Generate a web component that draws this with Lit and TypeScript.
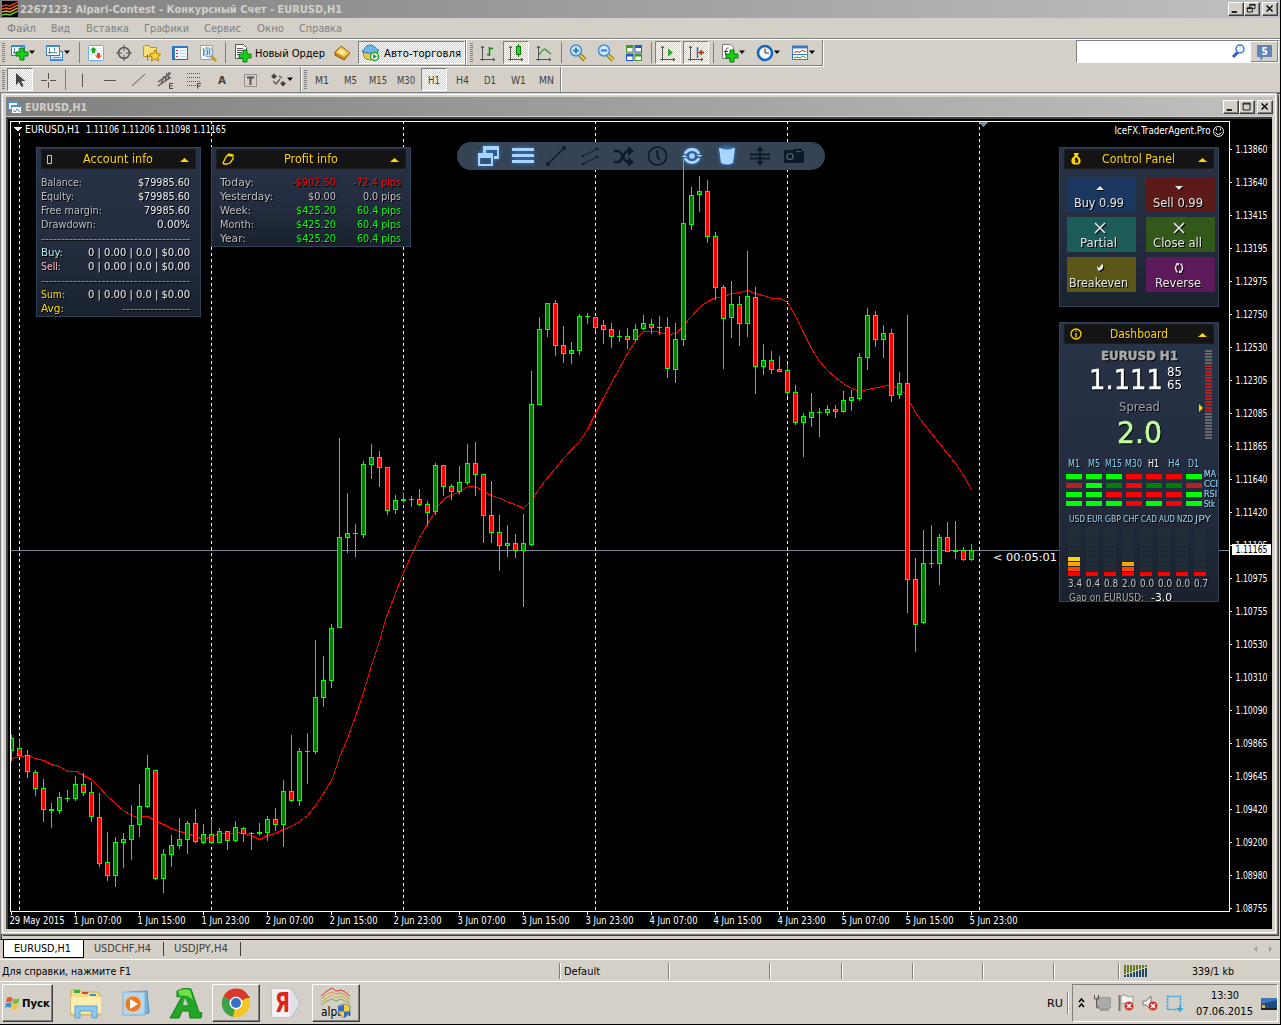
import { LitElement, html, svg, css, nothing } from 'lit';
import { customElement } from 'lit/decorators.js';
import { classMap } from 'lit/directives/class-map.js';
import { styleMap } from 'lit/directives/style-map.js';

// [high, top, bottom, low, up]; one candle every 8px
const CANDLES: number[][] = [
  [735, 738, 751, 761, 1], [740, 748, 756, 756, 0], [750, 755, 772, 778, 0], [770, 772, 789, 796, 0],
  [779, 788, 810, 822, 0], [803, 809, 811, 828, 1], [792, 797, 811, 814, 1], [790, 798, 799, 802, 1],
  [776, 784, 799, 801, 1], [773, 784, 793, 796, 0], [782, 792, 817, 822, 0], [793, 817, 864, 867, 0],
  [832, 862, 876, 881, 0], [837, 842, 876, 887, 1], [833, 839, 843, 868, 1], [805, 825, 840, 860, 1],
  [784, 806, 825, 837, 1], [755, 768, 807, 808, 1], [770, 770, 879, 880, 0], [849, 854, 879, 893, 1],
  [835, 845, 855, 867, 1], [818, 839, 846, 849, 1], [821, 823, 840, 854, 1], [809, 823, 842, 843, 0],
  [824, 834, 843, 844, 1], [819, 834, 843, 844, 0], [828, 831, 843, 843, 1], [831, 831, 841, 850, 0],
  [821, 827, 841, 842, 1], [827, 828, 834, 842, 0], [832, 833, 834, 850, 1], [823, 832, 834, 836, 1],
  [816, 819, 833, 841, 1], [808, 819, 825, 831, 0], [780, 791, 825, 847, 1], [735, 791, 801, 802, 0],
  [748, 751, 801, 806, 1], [733, 751, 752, 784, 1], [640, 697, 752, 754, 1], [656, 680, 698, 707, 1],
  [624, 628, 681, 688, 1], [438, 537, 628, 628, 1], [493, 533, 538, 553, 1], [524, 533, 534, 557, 1],
  [461, 464, 535, 538, 1], [444, 457, 465, 479, 1], [451, 457, 468, 487, 0], [467, 467, 511, 515, 0],
  [495, 500, 510, 514, 1], [493, 499, 501, 503, 1], [496, 499, 500, 507, 1], [489, 499, 505, 506, 0],
  [501, 504, 513, 526, 0], [463, 465, 512, 515, 1], [465, 465, 487, 496, 0], [484, 486, 492, 500, 0],
  [466, 482, 492, 494, 1], [444, 463, 483, 485, 1], [442, 463, 475, 496, 0], [474, 474, 516, 543, 0],
  [481, 515, 533, 543, 0], [515, 532, 546, 571, 0], [525, 543, 546, 557, 1], [534, 543, 551, 558, 0],
  [514, 543, 551, 607, 1], [371, 404, 545, 546, 1], [317, 329, 405, 405, 1], [303, 303, 330, 337, 1],
  [300, 303, 346, 356, 0], [326, 345, 354, 363, 0], [342, 350, 354, 364, 1], [314, 316, 351, 355, 1],
  [313, 316, 317, 324, 1], [317, 317, 328, 331, 0], [320, 325, 330, 344, 0], [323, 329, 337, 348, 0],
  [330, 336, 337, 342, 1], [328, 336, 340, 349, 0], [324, 329, 340, 342, 1], [315, 323, 329, 330, 1],
  [319, 324, 328, 334, 0], [316, 327, 328, 335, 1], [317, 327, 369, 378, 0], [323, 339, 370, 383, 1],
  [159, 223, 340, 346, 1], [187, 195, 225, 230, 1], [176, 191, 195, 212, 1], [180, 191, 237, 243, 0],
  [232, 236, 288, 300, 0], [285, 287, 319, 369, 0], [281, 304, 318, 338, 1], [296, 304, 324, 346, 0],
  [251, 296, 324, 337, 1], [287, 297, 367, 394, 0], [344, 360, 367, 375, 1], [351, 360, 370, 374, 0],
  [356, 369, 372, 372, 0], [364, 370, 393, 397, 0], [385, 392, 423, 425, 0], [413, 416, 423, 457, 1],
  [393, 412, 418, 427, 1], [408, 412, 413, 437, 1], [405, 409, 413, 416, 1], [405, 409, 412, 418, 0],
  [391, 400, 412, 413, 1], [390, 397, 401, 411, 1], [353, 357, 399, 401, 1], [308, 315, 358, 370, 1],
  [311, 315, 340, 347, 0], [325, 333, 340, 358, 1], [329, 333, 396, 402, 0], [372, 383, 395, 399, 1],
  [315, 383, 580, 613, 0], [558, 579, 625, 652, 0], [530, 563, 623, 624, 1], [525, 563, 564, 568, 1],
  [534, 537, 564, 585, 1], [522, 537, 552, 552, 0], [521, 550, 552, 559, 1], [547, 550, 560, 561, 0],
  [544, 550, 560, 561, 1],
];

const MA =
  '12,758 19,756 28,755 35,758 43,760 51,764 59,766 67,771 76,771 83,775 91,779 99,787 107,796 115,803 123,810 131,815 ' +
  '137,817 147,816 155,820 163,824 171,828 179,831 187,833 195,836 203,839 211,836 220,833 230,833 237,832 247,834 253,836 ' +
  '259,839 267,835 275,833 283,829 291,826 299,821 307,815 315,805 323,793 332,778 339,757 347,738 355,716 363,692 371,665 ' +
  '379,641 385,619 403,572 420,535 428,522 438,505 444,498 452,494 458,492 467,486 475,486 483,491 491,495 500,498 509,502 ' +
  '517,505 523,508 531,500 540,486 550,474 563,458 579,441 587,429 595,413 602,399 627,353 638,336 643,331 656,331 663,333 ' +
  '670,334 677,332 682,326 690,317 700,306 707,301 713,298 723,296 731,293 740,292 747,290 755,293 763,295 771,298 780,298 ' +
  '787,302 796,317 803,332 811,348 819,361 827,370 835,377 843,383 851,388 860,391 867,389 877,387 887,385 897,387 904,393 ' +
  '910,403 915,412 923,423 939,443 955,463 963,475 971,489';

const PRICES = [
  '1.13860', '1.13640', '1.13415', '1.13195', '1.12975', '1.12750', '1.12530', '1.12305', '1.12085', '1.11865', '1.11640', '1.11420',
  '1.11195', '1.10975', '1.10755', '1.10530', '1.10310', '1.10090', '1.09865', '1.09645', '1.09420', '1.09200', '1.08980', '1.08755',
];

const TIMES = [
  '29 May 2015', '1 Jun 07:00', '1 Jun 15:00', '1 Jun 23:00', '2 Jun 07:00', '2 Jun 15:00', '2 Jun 23:00', '3 Jun 07:00',
  '3 Jun 15:00', '3 Jun 23:00', '4 Jun 07:00', '4 Jun 15:00', '4 Jun 23:00', '5 Jun 07:00', '5 Jun 15:00', '5 Jun 23:00',
];

// single text line squeezed to a known width
const fit = (text: string, w: number, cls = '', h = 14, base = 11) => html`
  <svg class="fit ${cls}" width=${w} height=${h}><text x="0" y=${base} textLength=${w} lengthAdjust="spacingAndGlyphs">${text}</text></svg>`;

const icon = (body: unknown, size = 20) => html`<svg class="ico" width=${size} height=${size} viewBox="0 0 ${size} ${size}">${body}</svg>`;

const plus = (x: number, y: number) => svg`
  <path d="M${x + 4} ${y}h4v4h4v4h-4v4h-4v-4h-4v-4h4z" fill="#19d019" stroke="#0a7d0a"/>`;

const axes = svg`<path d="M4.500 3v15M2 16.500h15M3 5l1.500-2 1.500 2M15 15l2 1.500-2 1.500" fill="none" stroke="#555"/>`;

const lens = (sign: string) => svg`
  <path d="M12 12l5 5" stroke="#8a6a10" stroke-width="4"/><path d="M12 12l5 5" stroke="#f3d34a" stroke-width="2"/>
  <circle cx="8" cy="7.500" r="5.500" fill="#cfe9fb" stroke="#3f8fd0" stroke-width="1.500"/>
  <path d=${sign} stroke="#2f7fc4" stroke-width="2"/>`;

const ICONS: Record<string, unknown> = {
  newChart: svg`<rect x="1.500" y="2.500" width="13" height="10" fill="#fff" stroke="#3a7cc0"/><path d="M1 3h14" stroke="#3a8be0" stroke-width="2"/>
    <path d="M4.500 5v6M3 9.500h8M9 5v4" stroke="#5b87ad" fill="none"/>${plus(6, 5)}`,
  profiles: svg`<rect x="5.500" y="8.500" width="12" height="9" fill="#e8f2fb" stroke="#3a7cc0"/><rect x="1.500" y="2.500" width="13" height="10" fill="#fff" stroke="#3a7cc0"/>
    <path d="M1 3h14M5 17h13" stroke="#3a8be0" stroke-width="2"/><path d="M4.500 5v6M3 9.500h9M9.500 5v3M8 14.500h8" stroke="#5b87ad" fill="none"/>`,
  market: svg`<rect x="2.500" y="2.500" width="15" height="15" rx="1" fill="#fff" stroke="#6aaee6"/><path d="M4 5.500h12M4 8.500h12M4 11.500h12" stroke="#dbe6ee"/>
    <path d="M7.500 4l3.500 3.500h-2v2.500h-3v-2.500h-2z" fill="#1da51d"/><path d="M12.500 16l-3.500-3.500h2v-2.500h3v2.500h2z" fill="#e5432a"/>`,
  target: svg`<circle cx="10" cy="10" r="5.500" fill="none" stroke="#555" stroke-width="1.500"/><path d="M10 2v16M2 10h16" stroke="#555"/><circle cx="10" cy="10" r="2" fill="#d4d0c8"/>`,
  navigator: svg`<path d="M1.500 3.500l1-1h5l1 2h6v9h-13z" fill="#f7dc79" stroke="#b8922a"/><path d="M5.500 12v6" stroke="#222" stroke-dasharray="1 1"/>
    <path d="M13 7l1.800 3.700 4 .5-3 2.800.8 4-3.600-2-3.600 2 .8-4-3-2.800 4-.5z" fill="#ffd12e" stroke="#a87d12"/>`,
  dataWin: svg`<rect x="2.500" y="3.500" width="15" height="13" fill="#f2f8fd" stroke="#2468b4"/><path d="M3 4h14M4 4v12" stroke="#2d78cc" stroke-width="2"/>
    <path d="M6 7.500h2M6 10.500h2M6 13.500h2" stroke="#c33"/><path d="M10 7.500h6M10 10.500h6M10 13.500h6" stroke="#c4d8ea"/>`,
  tester: svg`<path d="M2.500 2.500h12v14h-12z" fill="#f4f4f0" stroke="#a0a09a"/><path d="M5.500 5v8M8.500 4v9" stroke="#68b"/><path d="M13 13l5 5" stroke="#c99a1b" stroke-width="3"/>
    <circle cx="10.500" cy="9.500" r="4.500" fill="#bfe0f4" fill-opacity=".9" stroke="#6f9ab8"/><path d="M9.500 7v5M11.500 6.500v5" stroke="#48a"/>`,
  order: svg`<path d="M2.500 1.500h8l3 3v11h-11z" fill="#fff" stroke="#555"/><path d="M4 5.500h6M4 7.500h8M4 9.500h5M4 11.500h4" stroke="#556"/>${plus(6, 7)}`,
  editor: svg`<path d="M3 9l6-6 9 7-6 7-9-5z" fill="#c98d16" stroke="#8a5d08"/><path d="M3.500 9.500l5.500-6 8.500 6.500-5.500 4z" fill="#f5c84a"/><path d="M5 9.500l4-4 5 4-3 2.500z" fill="#fde79c"/>`,
  auto: svg`<path d="M2 9q0 8 7 8t8-8z" fill="#e9c94c" stroke="#a8851d"/><path d="M1 8c3-1 3-6 8-6s5 4 9 5c-1 4-15 4-17 1z" fill="#6fb6e4" stroke="#2e78ae"/>
    <circle cx="13.500" cy="13.500" r="4" fill="#fff" stroke="#1fa52a" stroke-width="1.500"/><path d="M12 11l4 2.500-4 2.500z" fill="#1fa52a"/>`,
  bars: svg`${axes}<path d="M11.500 4v9M9 11.500h2M12 5.500h3" stroke="#0a8a0a" stroke-width="1.500" fill="none"/>`,
  candles: svg`${axes}<path d="M12.500 1v13" stroke="#087a08"/><rect x="10.500" y="3.500" width="4" height="8" fill="#2bd52b" stroke="#087a08"/>`,
  line: svg`${axes}<path d="M5 12q5-8 7-5l5 4" fill="none" stroke="#2a9a2a" stroke-width="1.300"/>`,
  zoomIn: lens('M5 7.500h6M8 4.500v6'),
  zoomOut: lens('M5 7.500h6'),
  tile: svg`<path d="M2 2h7.500v7.500h-7.500z" fill="#3f9a22"/><path d="M10.500 2h7.500v7.500h-7.500z" fill="#2456cc"/><path d="M2 10.500h7.500v7.500h-7.500z" fill="#2456cc"/><path d="M10.500 10.500h7.500v7.500h-7.500z" fill="#3f9a22"/>
    <path d="M3 5h5.500v3.500h-5.500zM11.500 5h5.500v3.500h-5.500zM3 13.500h5.500v3.500h-5.500zM11.500 13.500h5.500v3.500h-5.500z" fill="#fff"/>`,
  scroll: svg`${axes}<path d="M10 5.500l5 4-5 4z" fill="#25b325"/>`,
  shift: svg`${axes}<path d="M11.500 4v11" stroke="#1f6fc0" stroke-width="1.500"/><path d="M12 9.500l4-3v2h2v2h-2v2z" fill="#c43a12"/>`,
  indicators: svg`<path d="M2.500 1.500h8l3 3v11h-11z" fill="#fff" stroke="#777"/><path d="M5.500 12q0-8 3-7M4 8.500h4" stroke="#444" fill="none"/>${plus(6, 7)}`,
  clock: svg`<circle cx="10" cy="10" r="7" fill="#f2f6fa" stroke="#1467c0" stroke-width="2.600"/><path d="M10 5.500v4.500h4" stroke="#333" fill="none"/>`,
  templates: svg`<rect x="2.500" y="3.500" width="15" height="13" fill="#fff" stroke="#3a7cc0"/><path d="M2 4h16" stroke="#3a7cc0" stroke-width="3"/><path d="M4 9.500l3-1 2 1 3-2 4 1" stroke="#a33" fill="none"/>
    <path d="M3 11.500h14" stroke="#3a7cc0"/><path d="M4 15l3-1 3 1 3-2 3 2" stroke="#2a9a2a" fill="none"/>`,
  cursor: svg`<path d="M6 3v12l3-3 2.500 5 2-1-2.300-5h4z" fill="#444"/>`,
  cross: svg`<path d="M10.500 3v6M10.500 12v6M3 10.500h6M12 10.500h6" stroke="#555"/>`,
  vline: svg`<path d="M10.500 4v13" stroke="#555"/>`,
  hline: svg`<path d="M4 10.500h12" stroke="#555"/>`,
  trend: svg`<path d="M4 16L17 4" stroke="#555"/>`,
  equi: svg`<path d="M2 12l13-9M2 16l13-9M5 14l3-8M9 12l2-9M12 10l1-8" stroke="#555" stroke-width="1.200"/><path d="M17 13.500h-3.500v5h3.500M13.500 16h3" stroke="#444" fill="none"/>`,
  fibo: svg`<path d="M3 3.500h14M3 7.500h14M3 11.500h14M3 15.500h9" stroke="#555" stroke-dasharray="1 1"/><path d="M17 13.500h-3.500v5M13.500 16h3" stroke="#444" fill="none"/>`,
  label: svg`<rect x="4.500" y="4.500" width="12" height="12" fill="none" stroke="#555" stroke-dasharray="1 1"/><path d="M7 7.500h7M10.500 7v8" stroke="#555" stroke-width="2"/>`,
  arrows: svg`<path d="M3 6.500l3-3 3 3-3 2.500zM12 13.500l3-2.500 3 2.500-3 3z" fill="#444"/><path d="M11 6l3 2M5 11l3 3 4-5" stroke="#555" fill="none" stroke-width="1.300"/>`,
};

type Tool = { k: string; on?: boolean; w?: number };

const TOOLS: Tool[] = [
  { k: 'grip' }, { k: 'newChart', w: 35 }, { k: 'profiles', w: 35 }, { k: 'sep' },
  { k: 'market' }, { k: 'target' }, { k: 'navigator' }, { k: 'dataWin' }, { k: 'tester' }, { k: 'sep' },
];
const CHART_TOOLS: Tool[] = [
  { k: 'grip' }, { k: 'bars' }, { k: 'candles', on: true }, { k: 'line' }, { k: 'sep' },
  { k: 'zoomIn' }, { k: 'zoomOut' }, { k: 'tile' }, { k: 'sep' }, { k: 'scroll', on: true }, { k: 'shift', on: true }, { k: 'sep' },
  { k: 'indicators', w: 35 }, { k: 'clock', w: 35 }, { k: 'templates', w: 36 },
];
const LINE_TOOLS: Tool[] = [
  { k: 'grip' }, { k: 'cursor', on: true }, { k: 'cross' }, { k: 'sep' }, { k: 'vline' }, { k: 'hline' }, { k: 'trend' },
  { k: 'equi' }, { k: 'fibo' }, { k: 'A' }, { k: 'label' }, { k: 'arrows', w: 36 },
];
const FRAMES: [string, number][] = [['M1', 14], ['M5', 13], ['M15', 18], ['M30', 18], ['H1', 12], ['H4', 13], ['D1', 12], ['W1', 15], ['MN', 15]];

const MENU: [string, number, number][] = [
  ['Файл', 7, 29], ['Вид', 51, 19], ['Вставка', 86, 43], ['Графики', 144, 45], ['Сервис', 204, 37], ['Окно', 257, 27], ['Справка', 299, 43],
];

const ACCOUNT: [string, number, string, number, string][] = [
  ['Balance:', 41, '$79985.60', 52, ''], ['Equity:', 33, '$79985.60', 52, ''], ['Free margin:', 61, '79985.60', 46, ''], ['Drawdown:', 55, '0.00%', 33, ''],
  ['', 0, '-------------------------------------', 149, 'rule'],
  ['Buy:', 22, '0 | 0.00 | 0.0 | $0.00', 102, 'buy'], ['Sell:', 20, '0 | 0.00 | 0.0 | $0.00', 102, 'sell'],
  ['', 0, '-------------------------------------', 149, 'rule'],
  ['Sum:', 24, '0 | 0.00 | 0.0 | $0.00', 102, 'sum'], ['Avg:', 23, '-----------------', 68, 'sum dim'],
];

const PROFIT: [string, number, string, number, string, number, string][] = [
  ['Today:', 34, '-$902.50', 44, '-72.4 pips', 48, 'loss'],
  ['Yesterday:', 53, '$0.00', 28, '0.0 pips', 38, 'flat'],
  ['Week:', 31, '$425.20', 40, '60.4 pips', 44, 'gain'],
  ['Month:', 34, '$425.20', 40, '60.4 pips', 44, 'gain'],
  ['Year:', 26, '$425.20', 40, '60.4 pips', 44, 'gain'],
];

const ACTIONS: [string, number, string, unknown][] = [
  ['Buy 0.99', 50, 'navy', svg`<path d="M6 12l4-4 4 4z"/>`],
  ['Sell 0.99', 50, 'maroon', svg`<path d="M6 8l4 4 4-4z"/>`],
  ['Partial', 37, 'teal', svg`<path d="M5 5l10 10M15 5L5 15" stroke="#e8e8e8" stroke-width="1.600"/>`],
  ['Close all', 49, 'moss', svg`<path d="M5 5l10 10M15 5L5 15" stroke="#e8e8e8" stroke-width="1.600"/>`],
  ['Breakeven', 59, 'olive', svg`<path d="M7 8l2 2 3-4 1 1c1 3-1 5-4 6-1-1-2-2-2-5z"/>`],
  ['Reverse', 46, 'plum', svg`<path d="M8.500 5.500q-4 4 0 9M11.500 5.500q4 4 0 9" fill="none" stroke="#e8e8e8" stroke-width="1.500"/><path d="M7 5h3v3zM13 15h-3v-3z"/>`],
];

const SIGNALS = ['lllrrrl', 'dlgrggd', 'llrrrrl', 'lllrlrl'];
const CURRENCIES: [string, number, string][] = [
  ['USD', 4, '3.4'], ['EUR', 1, '0.4'], ['GBP', 1, '0.8'], ['CHF', 3, '2.0'], ['CAD', 1, '0.0'], ['AUD', 1, '0.0'], ['NZD', 1, '0.0'], ['JPY', 1, '0.7'],
];
const STRENGTH = ['#ff0000', '#ff4500', '#ffa500', '#ffd700'];

@customElement('app-root')
export class AppRoot extends LitElement {
  static styles = css`
    :host {
      display: block;
      width: 1281px;
      height: 1025px;
      overflow: hidden;
      background: #d4d0c8;
      color: #000;
      font: 11px 'DejaVu Sans Condensed', 'DejaVu Sans', sans-serif;
      font-stretch: condensed;
    }
    * { box-sizing: border-box; }
    svg { display: block; flex: none; }
    .fit { overflow: visible; fill: currentColor; }
    .b { font-weight: bold; }
    .screen {
      display: flex;
      flex-direction: column;
      width: 1281px;
      height: 1025px;
      border-right: 1px solid #000;
      border-bottom: 1px solid #000;
    }
    .title {
      display: flex;
      align-items: center;
      height: 18px;
      padding: 0 2px;
      background: linear-gradient(90deg, #808080, #c0c0c0);
      color: #d4d0c8;
    }
    .title .fit { margin-left: 2px; }
    .grow { flex: 1; }
    .wbtn {
      width: 16px;
      height: 14px;
      background: #d4d0c8;
      border: 1px solid;
      border-color: #fff #404040 #404040 #fff;
      box-shadow: inset -1px -1px #808080;
    }
    .wbtn.gap { margin-left: 2px; }
    .menu {
      display: flex;
      height: 21px;
      padding-top: 3px;
      color: #808080;
      border-bottom: 1px solid #808080;
    }
    .bars { display: flex; height: 53px; border-top: 1px solid #fff; }
    .rows { flex: 1; display: flex; flex-direction: column; align-items: flex-start; }
    .bar {
      display: flex;
      height: 26px;
      border-right: 1px solid #808080;
      border-bottom: 1px solid #808080;
      box-shadow: 1px 1px #fff;
    }
    .bar.low { height: 25px; margin-top: 1px; border-bottom: 0; box-shadow: 1px 0 #fff; color: #404040; }
    .grip { width: 6px; padding: 3px 0 3px 2px; }
    .grip::before {
      content: '';
      display: block;
      width: 3px;
      height: 100%;
      background: repeating-linear-gradient(#808080 0 1px, transparent 1px 2px);
    }
    .group { display: flex; border-right: 1px solid #808080; box-shadow: 1px 0 #fff; margin-right: 2px; }
    .bar.low .group { margin-right: 1px; }
    .sep { width: 6px; padding: 2px 0 2px 3px; }
    .sep::before { content: ''; display: block; width: 1px; height: 100%; background: #808080; }
    .tool { display: flex; align-items: center; justify-content: center; width: 28px; height: 23px; margin-top: 1px; }
    .tool.drop { justify-content: flex-start; padding-left: 4px; }
    .tool.drop .ico + svg { margin-left: -1px; }
    .tool.on {
      width: 26px;
      margin: 1px 1px 0;
      background: repeating-conic-gradient(#fff 0 25%, #d4d0c8 0 50%) 0 0 / 2px 2px;
      border: 1px solid;
      border-color: #808080 #fff #fff #808080;
    }
    .tool.wide { width: auto; }
    .tool.order { padding-left: 5px; }
    .tool.order .fit { margin: 0 3px 0 2px; }
    .tool.auto { width: 107px; margin-left: 2px; margin-right: 0; padding-right: 2px; }
    .tool.auto .fit { margin-left: 3px; }
    .finder { display: flex; width: 203px; height: 23px; margin: 0 1px 0 0; border: 1px solid #808080; background: #fff; padding-left: 153px; border-right: 0; border-bottom-color: #fff; }
    .finder .chat { width: 28px; margin: 0 1px 0 auto; background: #d4d0c8; border: 1px solid; border-color: #fff #808080 #808080 #fff; padding: 1px 0 0 5px; }

    .mdi {
      height: 848px;
      padding: 1px 0 0 1px;
      background: #d4d0c8;
      border-top: 1px solid #808080;
      border-left: 1px solid #808080;
      border-bottom: 1px solid #000;
      box-shadow: inset 1px 1px #404040;
    }
    .child {
      width: 1274px;
      height: 839px;
      padding: 2px 1px 3px 3px;
      border: 1px solid #fff;
      outline: 1px solid #d4d0c8;
      box-shadow: 1px 1px 0 1px #808080, 2px 2px 0 1px #404040;
    }
    .child .title { height: 19px; padding: 0 0 0 1px; margin-right: 1px; }
    .child .title .fit { margin-left: 2px; }
    .chart { position: relative; width: 1266px; height: 812px; margin-top: 1px; border: solid #404040; border-width: 2px 0 0 2px; background: #000; }
    .plot text { fill: #fff; font-size: 10px; }
    .plot .count { font: 11px 'DejaVu Sans', sans-serif; }

    .panel {
      position: absolute;
      overflow: hidden;
      background: linear-gradient(#283347, #242d40 55%, #1a222f);
      border: 1px solid #304357;
      color: #bebebe;
    }
    .panel .fit { filter: drop-shadow(1px 1px 0 #000); }
    .account { left: 28px; top: 28px; width: 165px; height: 170px; }
    .profit { left: 203px; top: 28px; width: 200px; height: 100px; }
    .control { left: 1051px; top: 28px; width: 160px; height: 160px; }
    .dash { left: 1051px; top: 203px; width: 160px; height: 280px; }
    .head {
      display: flex;
      align-items: center;
      justify-content: space-between;
      height: 20px;
      margin: 1px 4px 6px;
      padding: 0 6px 0 4px;
      background: #141414;
      border: 1px solid #1d1d1d;
      color: gold;
      font-size: 13px;
    }
    .head .fit { margin-left: -4px; }
    .row { display: flex; justify-content: space-between; height: 14px; padding: 0 10px 0 4px; }
    .row .val { color: #eee; }
    .row.rule .val, .row.dim .val { color: #999; }
    .row.rule .fit:first-child { display: none; }
    .row.buy .key { color: #afeeee; }
    .row.sell .key { color: #ffb6c1; }
    .row.sum .key { color: gold; }
    .profit .row { padding: 0 9px 0 8px; }
    .profit .row .fit:nth-child(2) { margin-left: auto; }
    .profit .row .cell { display: flex; justify-content: flex-end; width: 65px; }
    .loss .num { color: #f00; }
    .gain .num { color: #0f0; }
    .actions { display: grid; grid-template-columns: 69px 69px; gap: 5px 10px; padding: 2px 7px; font-size: 13px; color: #e8e8e8; }
    .act { display: flex; flex-direction: column; align-items: center; height: 35px; padding: 1px 6px 0 0; }
    .act .ico { fill: #e8e8e8; filter: drop-shadow(1px 1px 0 #000); margin-left: 3px; }
    .act .fit { margin-top: -2px; }
    .navy { background: #1b375f; }
    .maroon { background: #5c1a18; }
    .teal { background: #1b5b58; }
    .moss { background: #33591a; }
    .olive { background: #5a5719; }
    .plum { background: #5c1a5b; }
    .quote { position: relative; display: flex; flex-direction: column; align-items: center; height: 106px; margin-top: -1px; }
    .pair { font: 900 12px 'DejaVu Sans', sans-serif; stroke: currentColor; stroke-width: .5; color: #a9a9a9; }
    .price { display: flex; gap: 4px; margin: 3px 8px 0 0; color: #fff; }
    .big { font: 26px 'DejaVu Sans', sans-serif; stroke: currentColor; stroke-width: .4; }
    .small { font: 12px 'DejaVu Sans', sans-serif; }
    .spread { font-size: 13px; color: #a0a0a0; margin-top: 6px; }
    .pt { font-size: 30px; color: #c0ff9c; stroke: currentColor; stroke-width: .5; margin-top: 1px; }
    .meter { position: absolute; right: 6px; top: 1px; display: grid; gap: 1px; }
    .meter i { width: 7px; height: 2px; background: #696969; }
    .meter i.hot { background: #b22222; }
    .mark { position: absolute; right: 15px; top: 55px; }
    .frames { display: flex; padding: 1px 0 0 4px; color: #87ceeb; font-size: 10px; }
    .frames span { width: 20px; display: flex; justify-content: center; }
    .frames .fit { margin-left: -1px; }
    .frames .cur { color: #fff; }
    .sig { display: flex; justify-content: space-between; height: 45px; padding-left: 6px; }
    .grid { display: grid; grid-template-columns: repeat(7, 16px); gap: 4px; align-content: start; padding-top: 4px; }
    .grid i { height: 5px; }
    .l { background: #0f0; }
    .r { background: #f00; }
    .g { background: #008000; }
    .d { background: #b22222; }
    .names { width: 14px; color: #87ceeb; font-size: 8px; stroke: currentColor; stroke-width: .2; }
    .cur-row { display: flex; padding-left: 8px; }
    .ccy { width: 18px; display: flex; flex-direction: column; }
    .ccy .code { font: 8px 'DejaVu Sans', sans-serif; color: #a0d4ee; margin-left: 1px; }
    .stack { display: flex; flex-direction: column-reverse; gap: 1px; width: 12px; margin-top: 1px; }
    .stack i { height: 4px; background: #222c36; }
    .ccy .num { font-size: 10px; color: #c8c8c8; }
    .gapline { display: flex; gap: 7px; padding-left: 9px; font: 10px 'DejaVu Sans', sans-serif; color: #a9a9a9; }
    .gapline .v { color: #fff; }

    .tabs { display: flex; height: 19px; padding-left: 3px; color: #404040; }
    .tab { width: 81px; height: 18px; padding: 1px 0 0 10px; }
    .tab.sel { background: #fff; color: #000; border: 1px solid #000; border-top: 0; }
    .tab.bar-r { border-right: 1px solid #404040; height: 14px; margin-top: 2px; width: 77px; padding-top: 0; }
    .tab.bar-r .fit { margin-top: -1px; }
    .tab.first { width: 80px; padding-left: 10px; }
    .status { display: flex; height: 23px; border-top: 1px solid #fff; border-bottom: 1px solid #fff; padding: 3px 0; }
    .pane { height: 16px; border-left: 1px solid #808080; box-shadow: inset 1px 0 #fff; padding-left: 4px; display: flex; align-items: center; }
    .pane:first-child { border: 0; box-shadow: none; padding-left: 2px; }
    .traffic { margin: 1px 46px 0 0; }
    .task { display: flex; align-items: center; flex: 1; padding: 0 2px; }
    .raised { border: 1px solid; border-color: #fff #404040 #404040 #fff; box-shadow: inset -1px -1px #808080; height: 38px; display: flex; align-items: center; justify-content: center; }
    .start { width: 51px; gap: 1px; }
    .apps { display: flex; align-items: center; gap: 2px; margin-left: 9px; }
    .app { width: 48px; display: flex; justify-content: center; }
    .tray { display: flex; align-items: center; width: 206px; height: 38px; border: 1px solid; border-color: #808080 #fff #fff #808080; padding-left: 4px; }
    .tray-sep { height: 22px; width: 5px; border-left: 1px solid #808080; box-shadow: inset 1px 0 #fff; }
    .lang { margin-right: 4px; }
    .clock { display: flex; flex-direction: column; align-items: center; gap: 2px; margin: 0 8px 0 13px; }
  `;

  private tool(t: Tool) {
    if (t.k === 'grip' || t.k === 'sep') return html`<div class=${t.k}></div>`;
    if (t.k === 'A') return html`<div class="tool">${fit('A', 8, 'b')}</div>`;
    return html`
      <div class=${classMap({ tool: true, on: !!t.on, drop: !!t.w })} style=${t.w ? styleMap({ width: `${t.w}px` }) : nothing}>
        ${icon(ICONS[t.k])}
        ${t.w ? html`<svg width="7" height="5"><path d="M0 .5h6l-3 3.500z"/></svg>` : nothing}
      </div>`;
  }

  private windowButtons(mid: 'restore' | 'max') {
    return html`
      <svg class="wbtn" viewBox="0 0 16 14"><path d="M3 10.500h6" stroke="#000" stroke-width="2"/></svg>
      <svg class="wbtn" viewBox="0 0 16 14">
        ${mid === 'max'
          ? svg`<path d="M3.500 2.500h8v8h-8zM3 3.500h9" fill="none" stroke="#000"/>`
          : svg`<path d="M5.500 5v-3.500h6v5h-2M5 2.500h7M2.500 5.500h6v5h-6zM2 6.500h7" fill="none" stroke="#000"/>`}
      </svg>
      <svg class="wbtn gap" viewBox="0 0 16 14"><path d="M4 3l7 7M11 3l-7 7" stroke="#000" stroke-width="1.600"/></svg>`;
  }

  private pill() {
    return svg`
      <rect x="457" y="142" width="368" height="28" rx="14" fill="#354354"/>
      <g fill="#a9d4ff" filter="drop-shadow(0 0 2px #2f80e0)">
        <path fill-rule="evenodd" d="M483 146h16v13h-5v-3h3v-6h-11v3h-3zM478 153h15v13h-15zM480 158v6h11v-6z"/>
        <path d="M512 148h22v3h-22zM512 154h22v3h-22zM512 160h22v3h-22z"/>
        <path d="M685 154q2-4.500 7-4.500t7 4.500M699 158q-2 4.500-7 4.500t-7-4.500" fill="none" stroke="#a9d4ff" stroke-width="2.800"/>
        <path d="M696 155h6.500l-2.500 2zM681.500 157h6.500l-4-2z"/><circle cx="692" cy="156" r="2.800"/>
        <path d="M719 148h16l-2 15q-6 3-12 0z"/><ellipse cx="727" cy="148" rx="6" ry="1.500" fill="#35689c"/>
      </g>
      <g fill="none" stroke="#0c1a2a" stroke-width="1.500">
        <path d="M548 164l16-16"/><path d="M583 156l14-7M583 164l14-7" stroke-width="1"/>
        <path d="M614 151h4c5 0 5 11 10 11h2M614 162h4c5 0 5-11 10-11h2" stroke-width="2.500"/>
        <circle cx="657.500" cy="156" r="9" stroke-width="1.600"/><path d="M657.500 150v7l2.500 3" stroke-width="2"/>
        <path d="M750 154.500h20M750 158.500h20M760 148v17" stroke-width="2"/>
      </g>
      <g fill="#0c1a2a">
        <circle cx="548" cy="164" r="2"/><circle cx="564" cy="148" r="2"/>
        <circle cx="583" cy="156" r="1.200"/><circle cx="597" cy="149" r="1.200"/><circle cx="583" cy="164" r="1.200"/><circle cx="597" cy="157" r="1.200"/>
        <path d="M628 146l6 5-6 5zM628 157l6 5-6 5zM756 151l4-5 4 5zM756 161l4 5 4-5z"/>
        <path d="M784 150h9l1-1h8v2h2v12h-20z"/><circle cx="790" cy="156.500" r="3" stroke="#5a6877" stroke-width="1.200"/><path d="M796 151.500h5" stroke="#4a5867"/>
      </g>`;
  }

  private plot() {
    return html`
      <svg class="plot" width="1264" height="810" viewBox="8 119 1264 810" shape-rendering="crispEdges">
        <g stroke="#fff" stroke-dasharray="3 3">
          ${[19, 211, 403, 595, 787, 979].map(x => svg`<path d="M${x + 0.5} 121V911"/>`)}
        </g>
        <g shape-rendering="auto">${this.pill()}</g>
        <path d="M979 122h9l-4.500 5z" fill="#778899"/>
        <polyline points=${MA} transform="translate(.5 .5)" fill="none" stroke="#f00"/>
        <path d="M11 550.500H1229" stroke="#778899"/>
        ${CANDLES.map(([hi, top, bot, lo, up], i) => {
          const x = 11 + i * 8;
          return svg`
            <rect x=${x} y=${hi} width="1" height=${lo - hi} fill="#0f0"/>
            <rect x=${x - 2} y=${top} width="5" height=${bot - top} fill="#0f0"/>
            ${bot - top > 2 ? svg`<rect x=${x - 1} y=${top + 1} width="3" height=${bot - top - 2} fill=${up ? '#008000' : '#f00'}/>` : nothing}`;
        })}
        <rect x="8" y="700" width="2" height="100"/>
        <path d="M10.500 911V121.500H1229.500V911.500H10" fill="none" stroke="#fff"/>
        <path d="M14 127h8l-4 5z" fill="#fff"/>
        <text x="25" y="133" textLength="55" lengthAdjust="spacingAndGlyphs">EURUSD,H1</text>
        <text x="86" y="133" textLength="140" lengthAdjust="spacingAndGlyphs">1.11106 1.11206 1.11098 1.11165</text>
        <text x="1114.500" y="134" textLength="96" lengthAdjust="spacingAndGlyphs">IceFX.TraderAgent.Pro</text>
        <g fill="none" stroke="#fff" shape-rendering="auto"><circle cx="1218.500" cy="131.500" r="5"/><path d="M1215.500 132.500q3 4 6 0M1216.500 128.500v2M1220.500 128.500v2"/></g>
        <text class="count" x="993" y="561" textLength="64" lengthAdjust="spacingAndGlyphs">&lt; 00:05:01</text>
        ${PRICES.map((p, i) => svg`
          <path d="M1230 ${149.5 + i * 33}h2" stroke="#fff"/>
          <text x="1235.500" y=${152.5 + i * 33} textLength="32" lengthAdjust="spacingAndGlyphs">${p}</text>`)}
        <rect x="1232" y="544" width="39" height="11" fill="#fff"/>
        <text x="1235.500" y="553" textLength="32" lengthAdjust="spacingAndGlyphs" style="fill:#000">1.11165</text>
        ${TIMES.map((t, i) => svg`
          <path d="M${11.5 + i * 64} 912v3" stroke="#fff"/>
          <text x=${9.5 + i * 64} y="924" textLength=${i ? 48 : 55} lengthAdjust="spacingAndGlyphs">${t}</text>`)}
      </svg>`;
  }

  private head(text: string, w: number, ico: unknown) {
    return html`
      <div class="head">
        <svg width="14" height="14" fill="none" stroke="gold" stroke-width="1.300">${ico}</svg>
        ${fit(text, w)}
        <svg width="9" height="5" fill="gold"><path d="M0 5l4.500-4 4.500 4z"/></svg>
      </div>`;
  }

  private accountPanel() {
    return html`
      <div class="panel account">
        ${this.head('Account info', 70, svg`<path d="M1.500 3.500h4v8h-4z" stroke-width="1"/>`)}
        ${ACCOUNT.map(([k, kw, v, vw, cls]) => html`
          <div class="row ${cls}">${fit(k, kw, 'key')}${fit(v, vw, 'val')}</div>`)}
      </div>
      <div class="panel profit">
        ${this.head('Profit info', 54, svg`<path d="M2 11l3-6 3-3 4 1v4l-3 4-3 1h-3zM6 3l5 1"/>`)}
        ${PROFIT.map(([k, kw, a, aw, p, pw, cls]) => html`
          <div class="row ${cls}">${fit(k, kw)}${fit(a, aw, 'num')}<span class="cell">${fit(p, pw, 'num')}</span></div>`)}
      </div>`;
  }

  private controlPanel() {
    return html`
      <div class="panel control">
        ${this.head('Control Panel', 73, svg`<path d="M5 1h5l-1.500 3c4 2 4 7 1 8.500h-5c-3-1.500-3-6.500 1-8.500z" fill="gold" stroke="none"/><path d="M8.500 6.500h-2v1.500h2v2h-2.500" stroke="#141414"/>`)}
        <div class="actions">
          ${ACTIONS.map(([text, w, cls, ico]) => html`<div class="act ${cls}">${icon(ico)}${fit(text, w)}</div>`)}
        </div>
      </div>`;
  }

  private dashboard() {
    const frames: [string, number][] = [['M1', 12], ['M5', 12], ['M15', 17], ['M30', 17], ['H1', 11], ['H4', 12], ['D1', 11]];
    return html`
      <div class="panel dash">
        ${this.head('Dashboard', 58, svg`<circle cx="7" cy="7" r="5"/><path d="M7 6v4.500M7 3.500v1.300"/>`)}
        <div class="quote">
          ${fit('EURUSD H1', 77, 'pair', 14, 10.5)}
          <div class="price">
            ${fit('1.111', 74, 'big', 24, 22.5)}
            <div>${fit('85', 15, 'small', 13, 9.5)}${fit('65', 15, 'small', 13, 9.5)}</div>
          </div>
          ${fit('Spread', 41, 'spread', 16, 13)}
          ${fit('2.0', 45, 'pt', 30, 28)}
          <div class="meter">
            ${Array.from({ length: 30 }, (_, i) => html`<i class=${classMap({ hot: i > 4 && i < 21 })}></i>`)}
          </div>
          <svg class="mark" width="4" height="8"><path d="M0 0l4 4-4 4z" fill="gold"/></svg>
        </div>
        <div class="frames">
          ${frames.map(([f, w]) => html`<span class=${f === 'H1' ? 'cur' : ''}>${fit(f, w)}</span>`)}
        </div>
        <div class="sig">
          <div class="grid">${SIGNALS.map(r => [...r].map(c => html`<i class=${c}></i>`))}</div>
          <div class="names">${fit('MA', 12, '', 10, 6.5)}${fit('CCI', 14, '', 10, 6.5)}${fit('RSI', 13, '', 10, 6.5)}${fit('Stk', 11, '', 10, 6.5)}</div>
        </div>
        <div class="cur-row">
          ${CURRENCIES.map(([code, n, v]) => html`
            <div class="ccy">
              ${fit(code, 16, 'code', 11, 7)}
              <div class="stack">
                ${Array.from({ length: 10 }, (_, i) => html`<i style=${styleMap(i < n ? { background: STRENGTH[i] } : {})}></i>`)}
              </div>
              ${fit(v, 14, 'num')}
            </div>`)}
        </div>
        <div class="gapline">${fit('Gap on EURUSD:', 75)}${fit('-3.0', 21, 'v')}</div>
      </div>`;
  }

  private taskbar() {
    return html`
      <div class="task">
        <div class="raised start">
          <svg width="16" height="16">
            <path d="M2 3q3-2 5.500 0l-1 4.500q-3-2-5.500 0z" fill="#e8562a"/><path d="M8.500 3.500q3 1.500 6 0l-1 4.500q-3 1.500-6 0z" fill="#7cb83c"/>
            <path d="M1 8.500q3-2 5.500 0l-1 4.500q-3-2-5.500 0z" fill="#3f8ed8"/><path d="M7.200 9q3 1.500 6 0l-1 4.500q-3 1.500-6 0z" fill="#f6c42c"/>
          </svg>
          ${fit('Пуск', 28, 'b')}
        </div>
        <div class="apps">
          <div class="app">
            <svg width="34" height="32">
              <path d="M2 3h9l2 2h16l2 3v20h-29z" fill="#f4dc8a" stroke="#c9a94c"/><path d="M5 3h6v3h-6z" fill="#3cae3c"/><path d="M13 5h6v2h-6z" fill="#d8452e"/><path d="M21 7h6v2h-6z" fill="#3a8be0"/>
              <path d="M2 10h30v16h-30z" fill="#fbeeb0"/><path d="M6 31v-12h22v12h-5v-7h-12v7z" fill="#8cc8ea" stroke="#5ba3cf"/>
            </svg>
          </div>
          <div class="app">
            <svg width="32" height="32"><path d="M9 5l18-1 2 22-18 2z" fill="#79b2dc" stroke="#4f8fc0"/><path d="M3 5h22v23h-22z" fill="#b5d8ef" stroke="#7fb2d6"/><circle cx="13" cy="17" r="8" fill="#ee7a22" stroke="#f9c08a"/><path d="M10 12l8 5-8 5z" fill="#fff"/></svg>
          </div>
          <div class="app">
            <svg width="34" height="32"><path d="M8 4q6-4 14-2l8 23 3 1-1 5h-11l-1-7h-7l-3 7h-9l4-7 8-15-5 1z" fill="#23a527" stroke="#128016"/><path d="M16 11l-2 7h5z" fill="#d4d0c8"/><path d="M9 4q6-3 12-1l3 10q-6-6-13-4z" fill="#6fe04a"/></svg>
          </div>
          <div class="app raised">
            <svg width="30" height="30"><circle cx="15" cy="15" r="14" fill="#f3c623"/><path d="M15 15L2.500 8.500A14 14 0 0 1 28 9z" fill="#d9382c"/><path d="M15 15l-3 14A14 14 0 0 1 2.500 8.500z" fill="#3da14a"/>
              <path d="M15 9h13.500" stroke="#d9382c" stroke-width="2"/><circle cx="15" cy="15" r="6.500" fill="#fff"/><circle cx="15" cy="15" r="5" fill="#3672c4"/></svg>
          </div>
          <div class="app">
            <svg width="34" height="32"><path d="M3 2h20l8 14-8 14h-20z" fill="#e2e2e4" stroke="#b8b8bc"/><path d="M3 2h18v28h-18z" fill="#f2f2f3"/><text x="6" y="25" font-size="26" font-weight="bold" fill="#e32219" textLength="15" lengthAdjust="spacingAndGlyphs">Я</text></svg>
          </div>
          <div class="app raised">
            <svg width="34" height="34">
              <g fill="none"><path d="M2 10l6-5 5-3 4 3 5-1 4 2 5 4" stroke="#d8352c"/><path d="M2 13l6-5 5-2 4 2 5-1 4 2 5 4" stroke="#e88a2c"/><path d="M2 16l6-4 5-3 4 3 5-2 4 2 5 4" stroke="#c9b42c"/><path d="M2 19l6-4 5-2 4 2 5-2 4 2 5 3" stroke="#7fa83c"/></g>
              <text x="2" y="30" textLength="30" lengthAdjust="spacingAndGlyphs" font-size="12">alpari</text>
              <path d="M25 18l6 2q0 9-6 12-6-3-6-12z" fill="#f4cf3a" stroke="#888"/><path d="M25 19v6.500h-5.500q-.5-3 0-5zM25 25.500h5.500q-1 4-5.500 6z" fill="#2e6fc8"/>
            </svg>
          </div>
        </div>
        <div class="grow"></div>
        <div class="lang">${fit('RU', 16)}</div>
        <div class="tray-sep"></div>
        <div class="tray">
          <svg width="10" height="12"><path d="M2 5l2.500-3 2.500 3M2 10l2.500-3 2.500 3" fill="none" stroke="#000" stroke-width="1.500"/></svg>
          <svg width="96" height="20" viewBox="-2 0 96 20">
            <path d="M8.500 5.500h12v9h-12z" fill="#aaa" stroke="#f0f0f0"/><path d="M8 5h13v10h-13zM11 17h9" fill="none" stroke="#666"/><path d="M5.500 2v4h4v-4M7.500 6v8h3" fill="none" stroke="#555"/>
            <path d="M30.500 2v16" stroke="#777" stroke-width="2"/><path d="M32 3q4-2 6 0t6 0v8q-4 2-6 0t-6 0z" fill="#f4f4f4" stroke="#999"/>
            <circle cx="40" cy="13" r="4.500" fill="#d8352c"/><path d="M38 11l4 4M42 11l-4 4" stroke="#fff" stroke-width="1.500"/>
            <path d="M54 8h3l5-5v14l-5-5h-3z" fill="#eee" stroke="#777"/><circle cx="64" cy="13" r="4.500" fill="#d8352c"/><path d="M62 11l4 4M66 11l-4 4" stroke="#fff" stroke-width="1.500"/>
            <path d="M78.500 3.500h13v13h-13z" fill="none" stroke="#1ba5e8" stroke-width="1.600" stroke-dasharray="2 1"/><path d="M91 13v6M88 16h6" stroke="#1ba5e8" stroke-width="1.500"/>
          </svg>
          <div class="clock">${fit('13:30', 28)}${fit('07.06.2015', 57)}</div>
          <svg width="16" height="16"><path d="M0 3h16v10h-16z" fill="#3f76b8"/><path d="M0 9l16-4v8h-16z" fill="#1e4a86"/><path d="M0 13h16v2h-16z" fill="#222"/><path d="M1 10h3v3h-3z" fill="#e6b92c"/></svg>
        </div>
      </div>`;
  }

  private toolbars() {
    return html`
      <div class="bars">
        <div class="rows">
          <div class="bar">
            <div class="group">
              ${TOOLS.map(t => this.tool(t))}
              <div class="tool wide order">${icon(ICONS.order)}${fit('Новый Ордер', 70)}</div>
              ${this.tool({ k: 'editor' })}
              <div class="tool on auto">${icon(ICONS.auto)}${fit('Авто-торговля', 77)}</div>
            </div>
            ${CHART_TOOLS.map(t => this.tool(t))}
          </div>
          <div class="bar low">
            <div class="group">${LINE_TOOLS.map(t => this.tool(t))}</div>
            <div class="grip"></div>
            ${FRAMES.map(([f, w]) => html`<div class=${classMap({ tool: true, on: f === 'H1' })}>${fit(f, w)}</div>`)}
          </div>
        </div>
        <div class="finder">
          <svg width="20" height="21"><path d="M3 16l5-5" stroke="#2a5cb8" stroke-width="3"/><circle cx="10" cy="8" r="4" fill="#eef6ff" stroke="#3f78cc" stroke-width="1.500"/></svg>
          <div class="chat">
            <svg width="18" height="20"><path d="M1 2h15v12h-9l-2 4-1-4h-3z" fill="#5f83b5"/><text x="5.500" y="12" fill="#fff" font-weight="bold" font-size="10">5</text></svg>
          </div>
        </div>
      </div>`;
  }

  render() {
    return html`
      <div class="screen">
        <div class="title">
          <svg width="16" height="16"><path d="M0 0h16v16H0z"/><g fill="none" stroke-width="1.500"><path d="M0 5l4-1 4 1 8-4" stroke="#e23a1a"/><path d="M0 8l4-1 4 1 8-4" stroke="#e8641a"/><path d="M0 11l4-1 4 1 8-4" stroke="#d8a81a"/><path d="M0 14l4-1 4 1 8-4" stroke="#6fc81a"/></g></svg>
          ${fit('2267123: Alpari-Contest - Конкурсный Счет - EURUSD,H1', 322, 'b')}
          <div class="grow"></div>
          ${this.windowButtons('restore')}
        </div>
        <div class="menu">
          ${MENU.map(([m, x, w], i) => html`
            <span style=${styleMap({ marginLeft: `${i ? x - MENU[i - 1][1] - MENU[i - 1][2] : x}px` })}>${fit(m, w)}</span>`)}
        </div>
        ${this.toolbars()}
        <div class="mdi">
          <div class="child">
            <div class="title">
              <svg width="16" height="16"><rect x="1.500" y="2.500" width="9" height="8" fill="#fff" stroke="#4a90e0"/><rect x="4.500" y="6.500" width="10" height="8" fill="#fff" stroke="#4a90e0"/><path d="M1 3h10M4 7h11" stroke="#4a90e0" stroke-width="2"/><path d="M6 11l2 2 2-3 3 3" stroke="#4a90e0" fill="none"/></svg>
              ${fit('EURUSD,H1', 62, 'b')}
              <div class="grow"></div>
              ${this.windowButtons('max')}
            </div>
            <div class="chart">
              ${this.plot()}
              ${this.accountPanel()}
              ${this.controlPanel()}
              ${this.dashboard()}
            </div>
          </div>
        </div>
        <div class="tabs">
          <div class="tab sel">${fit('EURUSD,H1', 57)}</div>
          <div class="tab bar-r first">${fit('USDCHF,H4', 57)}</div>
          <div class="tab bar-r">${fit('USDJPY,H4', 54)}</div>
          <div class="grow"></div>
          <svg width="36" height="18"><path d="M13 6v6l-3-3zM25 6v6l3-3z" fill="#999"/></svg>
        </div>
        <div class="status">
          ${[559, 109, 101, 72, 71, 70, 71, 65].map((w, i) => html`
            <div class="pane" style=${styleMap({ width: `${w}px` })}>
              ${i === 0 ? fit('Для справки, нажмите F1', 129) : i === 1 ? fit('Default', 36) : nothing}
            </div>`)}
          <div class="pane">
            <svg width="26" height="14">
              ${Array.from({ length: 8 }, (_, i) => svg`<rect x=${1 + i * 3} y="1" width="2" height=${9 - i} fill="#6b7d1a"/><rect x=${1 + i * 3} y=${11 - i} width="2" height=${2 + i} fill="#1a4a66"/>`)}
            </svg>
          </div>
          <div class="grow"></div>
          <div class="traffic">${fit('339/1 kb', 42)}</div>
        </div>
        ${this.taskbar()}
      </div>`;
  }
}
